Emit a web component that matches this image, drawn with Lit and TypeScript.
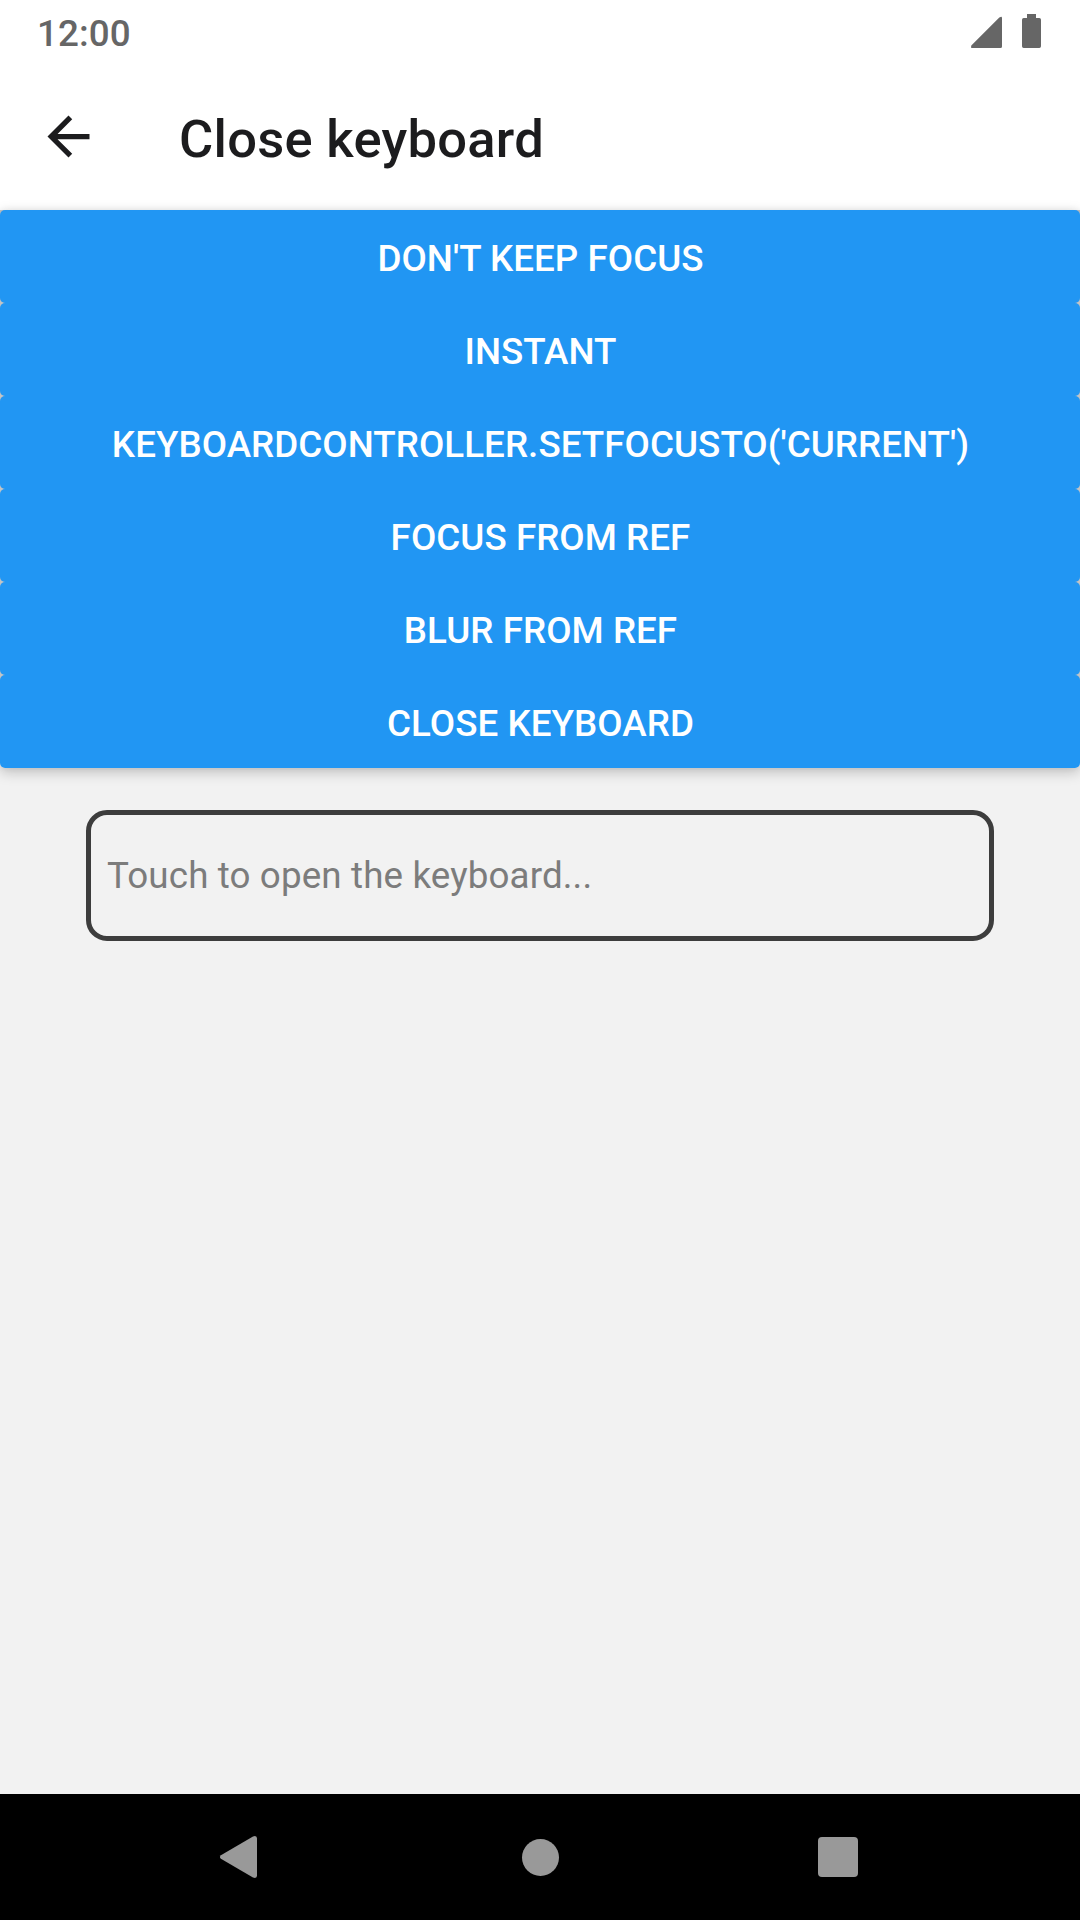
import { LitElement, html, css } from "lit";
import { customElement, property } from "lit/decorators.js";

@customElement("status-bar")
class StatusBar extends LitElement {
  static styles = css`
    :host {
      display: flex;
      justify-content: space-between;
      height: 63px;
      box-sizing: border-box;
      padding: 0 36px 0 37px;
      color: #666;
    }
    .clock {
      font: 500 36.75px/43px Roboto, sans-serif;
      letter-spacing: 0.1px;
      padding-top: 12px;
    }
    .icons { display: block; width: 74px; height: 63px; }
  `;
  render() {
    return html`
      <span class="clock">12:00</span>
      <svg class="icons" viewBox="970 0 74 63" fill="#666">
        <path d="M971.8 48h28.7q1.5 0 1.5-1.5V18.200q0-1.900-1.500-1.100l-1.200.5L971.300 45.500q-.9 2.500.5 2.500z" />
        <path d="M1027 14h9v4h3.300q1.700 0 1.700 1.700v26.500q0 1.700-1.700 1.700h-15.600q-1.700 0-1.700-1.700V19.700q0-1.700 1.700-1.700h3.300z" />
      </svg>
    `;
  }
}

@customElement("top-bar")
class TopBar extends LitElement {
  @property() heading = "";
  static styles = css`
    :host {
      display: flex;
      align-items: center;
      height: 147px;
      box-sizing: border-box;
      padding-left: 37px;
      gap: 79px;
    }
    .back { width: 63px; height: 63px; display: block; flex: none; }
    .title {
      margin: 0;
      padding-top: 4px;
      font: 500 52.5px/62px Roboto, sans-serif;
      letter-spacing: 0.27px;
      color: #1c1c1e;
      white-space: nowrap;
    }
  `;
  render() {
    return html`
      <svg class="back" viewBox="0 0 24 24" fill="#1c1c1e">
        <path d="M20 11H7.830l5.590-5.590L12 4l-8 8 8 8 1.410-1.410L7.830 13H20z" />
      </svg>
      <h1 class="title">${this.heading}</h1>
    `;
  }
}

@customElement("nav-bar")
class NavBar extends LitElement {
  static styles = css`
    :host {
      display: flex;
      justify-content: center;
      height: 126px;
      background: #000;
    }
    .keys { display: block; width: 680px; height: 126px; }
  `;
  render() {
    return html`
      <svg class="keys" viewBox="200 1794 680 126" fill="#999">
        <path d="M220.900 1855.200L253 1836.400Q257 1835 257 1838.500V1875.500Q257 1879 253 1877.600L220.900 1858.800Q219 1857 220.900 1855.200z" />
        <circle cx="540.500" cy="1857.500" r="18.500" />
        <rect x="818" y="1837" width="40" height="40" rx="4" />
      </svg>
    `;
  }
}

@customElement("app-root")
class AppRoot extends LitElement {
  static styles = css`
    :host {
      display: flex;
      flex-direction: column;
      width: 1080px;
      height: 1920px;
      overflow: hidden;
      background: #fff;
      font-family: Roboto, sans-serif;
    }
    .content {
      flex: 1;
      display: flex;
      flex-direction: column;
      background: linear-gradient(#c4c4c4 0 550px, #f2f2f2 550px);
    }
    .actions {
      display: flex;
      flex-direction: column;
      border-radius: 5px;
      box-shadow: 0 4px 14px rgba(0, 0, 0, 0.22), 0 0 7px rgba(0, 0, 0, 0.06);
    }
    .action {
      height: 93px;
      border: 0;
      border-radius: 5px;
      padding: 3px 0 0 1px;
      background: #2196f3;
      color: #fff;
      font: 500 36.75px/43px Roboto, sans-serif;
      letter-spacing: 0.05px;
      text-transform: uppercase;
    }
    .field {
      margin: 42px 86px 0;
      height: 131px;
      box-sizing: border-box;
      border: 5px solid #3d3d3d;
      border-radius: 21px;
      padding: 0 16px;
      background: transparent;
      font: 400 36.75px/43px Roboto, sans-serif;
      letter-spacing: 0.13px;
      outline: none;
    }
    .field::placeholder { color: #7c7c7c; opacity: 1; }
  `;
  private labels = [
    "Don't keep focus",
    "Instant",
    "KeyboardController.setFocusTo('current')",
    "Focus from ref",
    "Blur from ref",
    "Close keyboard",
  ];
  render() {
    return html`
      <status-bar></status-bar>
      <top-bar heading="Close keyboard"></top-bar>
      <main class="content">
        <div class="actions">
          ${this.labels.map((l) => html`<button class="action">${l}</button>`)}
        </div>
        <input class="field" placeholder="Touch to open the keyboard..." />
      </main>
      <nav-bar></nav-bar>
    `;
  }
}
